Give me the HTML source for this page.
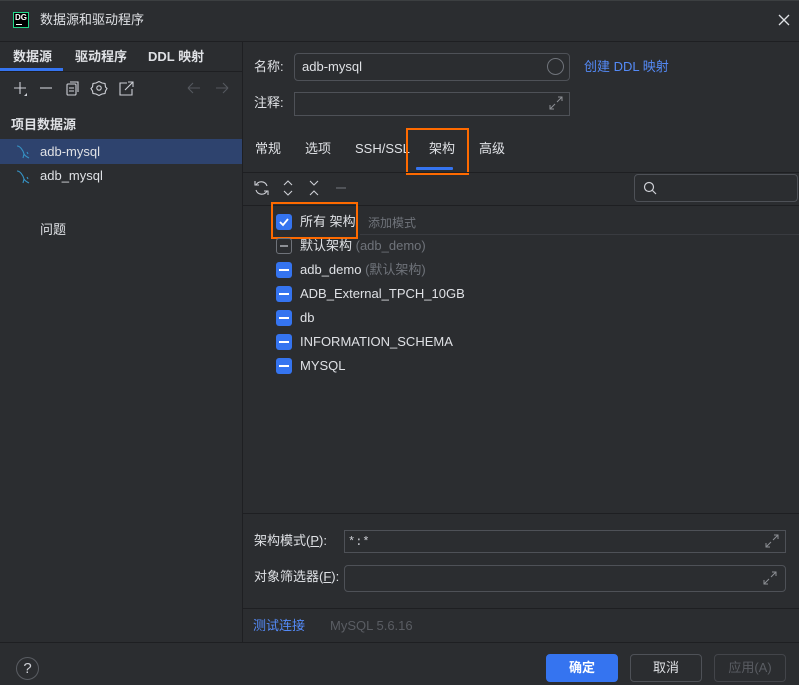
<!DOCTYPE html>
<html><head><meta charset="utf-8">
<style>
*{box-sizing:border-box;margin:0;padding:0}
body{width:799px;height:685px;background:#2b2d30;color:#dfe1e5;font-family:"Liberation Sans","Noto Sans CJK SC",sans-serif;font-size:13px;line-height:16px;position:relative;overflow:hidden}
.a{position:absolute;line-height:16px;white-space:nowrap}
.hl{position:absolute;height:1px;background:#1e1f22}
.vl{position:absolute;width:1px;background:#1e1f22}
.inp{position:absolute;border:1px solid #4e5157;border-radius:4px;background:#2b2d30}
.cb{position:absolute;left:276px;width:16px;height:16px;border-radius:3px;background:#3574f0}
.cb::after{content:"";position:absolute;left:3px;right:3px;top:7px;height:2px;background:#fff}
.row{position:absolute;left:300px;font-size:13px;line-height:16px;white-space:nowrap}
.gray{color:#6f737a}
.btn{position:absolute;top:654px;height:28px;width:72px;border-radius:4px;border:1px solid #4e5157;text-align:center;line-height:26px}
</style></head><body>
<div class="hl" style="top:0;left:0;width:799px;background:#3c3f41"></div>
<div class="a" style="left:13px;top:12px;width:16px;height:16px;background:#000;border:1px solid #21d789;"><div style="color:#fff;font-size:8px;font-weight:bold;line-height:8px;padding:1px 0 0 1px">DG</div><div style="position:absolute;left:2px;top:11px;width:6px;height:1px;background:#fff"></div></div>
<div class="a" style="left:40px;top:12px;font-size:13px">数据源和驱动程序</div>
<svg class="a" style="left:778px;top:14px" width="12" height="12"><path d="M1 1L11 11M11 1L1 11" stroke="#dfe1e5" stroke-width="1.3"/></svg>
<div class="hl" style="top:41px;left:0;width:799px"></div>
<div class="vl" style="left:242px;top:41px;height:601px"></div>
<div class="a" style="left:13px;top:49px;font-weight:bold">数据源</div>
<div class="a" style="left:75px;top:49px;font-weight:bold">驱动程序</div>
<div class="a" style="left:148px;top:49px;font-weight:bold">DDL 映射</div>
<div class="a" style="left:0;top:68px;width:63px;height:3px;background:#3574f0"></div>
<div class="hl" style="top:71px;left:0;width:242px"></div>
<svg class="a" style="left:12px;top:80px" width="125" height="18" fill="none" stroke="#ced0d6" stroke-width="1.1">
<path d="M2 8H14M8 2V14"/><path d="M15 13L15 16L12 16Z" fill="#ced0d6" stroke="none"/>
<path d="M28 8H40"/>
<rect x="55" y="4" width="9" height="11" rx="1"/><path d="M58 2H66V12M57 8H62M57 11H62"/>
<circle cx="87" cy="8" r="2.2"/><path d="M87 1.5L90 3L93 3.5L93.5 7L95 8.5L93.5 11L93 13.5L90 14L87 15.5L84 14L81 13.5L80.5 11L79 8.5L80.5 7L81 3.5L84 3Z"/>
<path d="M115 3H108V15H120V9M113 10L121 2M116 2H121V7"/>
</svg>
<svg class="a" style="left:186px;top:81px" width="44" height="14" fill="none" stroke="#55585e" stroke-width="1.1"><path d="M2 7H14M2 7L7 2M2 7L7 12"/><path d="M30 7H42M42 7L37 2M42 7L37 12"/></svg>
<div class="a" style="left:11px;top:117px;font-weight:bold">项目数据源</div>
<div class="a" style="left:0;top:139px;width:242px;height:25px;background:#2e436e"></div>
<svg class="a" style="left:15px;top:144px" width="16" height="16" fill="none" stroke="#3592c4" stroke-width="1.1"><path d="M2 2C5 2 8 6 9 10C10 12 12 13 14 14M9 10L8 14M12 8L13 10"/></svg>
<div class="a" style="left:40px;top:144px">adb-mysql</div>
<svg class="a" style="left:15px;top:169px" width="16" height="16" fill="none" stroke="#3592c4" stroke-width="1.1"><path d="M2 2C5 2 8 6 9 10C10 12 12 13 14 14M9 10L8 14M12 8L13 10"/></svg>
<div class="a" style="left:40px;top:168px">adb_mysql</div>
<div class="a" style="left:40px;top:222px">问题</div>
<div class="a" style="left:254px;top:59px">名称:</div>
<div class="inp" style="left:294px;top:53px;width:276px;height:28px"></div>
<div class="a" style="left:302px;top:59px">adb-mysql</div>
<div class="a" style="left:547px;top:58px;width:17px;height:17px;border:1px solid #6f737a;border-radius:50%"></div>
<div class="a" style="left:584px;top:59px;color:#548af7">创建 DDL 映射</div>
<div class="a" style="left:254px;top:95px">注释:</div>
<div class="inp" style="left:294px;top:92px;width:276px;height:24px;border-radius:0"></div>
<svg class="a" style="left:549px;top:96px" width="14" height="14" fill="none" stroke="#8c8f94" stroke-width="1"><path d="M8 6L13 1M9 1H13V5M6 8L1 13M1 9V13H5"/></svg>
<div class="a" style="left:255px;top:141px">常规</div>
<div class="a" style="left:305px;top:141px">选项</div>
<div class="a" style="left:355px;top:141px">SSH/SSL</div>
<div class="a" style="left:429px;top:141px">架构</div>
<div class="a" style="left:479px;top:141px">高级</div>
<div class="a" style="left:416px;top:167px;width:37px;height:3px;background:#3574f0;border-radius:1px"></div>
<div class="a" style="left:406px;top:128px;width:63px;height:47px;border:2px solid #ff6a00"></div>
<div class="hl" style="top:172px;left:243px;width:556px"></div>
<svg class="a" style="left:253px;top:179px" width="100" height="18" fill="none" stroke="#ced0d6" stroke-width="1.1">
<path d="M14 7A6 6 0 0 0 3 6M2 2V6H6M3 11A6 6 0 0 0 14 12M15 16V12H11"/>
<path d="M31 6L35 2L39 6M31 12L35 16L39 12"/>
<path d="M57 2L61 6L65 2M57 16L61 12L65 16"/>
<path d="M83 9H93" stroke="#6f737a"/>
</svg>
<div class="inp" style="left:634px;top:174px;width:164px;height:28px"></div>
<svg class="a" style="left:643px;top:181px" width="14" height="14" fill="none" stroke="#ced0d6" stroke-width="1.2"><circle cx="6" cy="6" r="4.5"/><path d="M9.5 9.5L13 13"/></svg>
<div class="hl" style="top:205px;left:243px;width:556px"></div>
<div class="a" style="left:276px;top:214px;width:16px;height:16px;border-radius:3px;background:#3574f0"></div>
<svg class="a" style="left:276px;top:214px" width="16" height="16"><path d="M4 8L7 11L12 5" stroke="#fff" stroke-width="1.8" fill="none"/></svg>
<div class="row" style="top:214px">所有 架构</div>
<div class="a gray" style="left:368px;top:215px;font-size:12px">添加模式</div>
<div class="hl" style="top:234px;left:360px;width:439px;background:#393b40"></div>
<div class="a" style="left:271px;top:202px;width:87px;height:37px;border:2px solid #ff6a00"></div>
<div class="a" style="left:276px;top:238px;width:16px;height:16px;border-radius:3px;border:1px solid #6f737a"><div style="position:absolute;left:3px;right:3px;top:6px;height:2px;background:#8c8f94"></div></div>
<div class="row" style="top:238px">默认架构 <span class="gray">(adb_demo)</span></div>
<div class="cb" style="top:262px"></div><div class="row" style="top:262px">adb_demo <span class="gray">(默认架构)</span></div>
<div class="cb" style="top:286px"></div><div class="row" style="top:286px">ADB_External_TPCH_10GB</div>
<div class="cb" style="top:310px"></div><div class="row" style="top:310px">db</div>
<div class="cb" style="top:334px"></div><div class="row" style="top:334px">INFORMATION_SCHEMA</div>
<div class="cb" style="top:358px"></div><div class="row" style="top:358px">MYSQL</div>
<div class="hl" style="top:513px;left:243px;width:556px"></div>
<div class="a" style="left:254px;top:533px">架构模式(<u>P</u>):</div>
<div class="inp" style="left:344px;top:530px;width:442px;height:23px;border-radius:0"></div>
<div class="a" style="left:348px;top:534px;color:#ced0d6;font-family:'Liberation Mono',monospace;font-size:12px">*:*</div>
<svg class="a" style="left:765px;top:534px" width="14" height="14" fill="none" stroke="#8c8f94" stroke-width="1"><path d="M8 6L13 1M9 1H13V5M6 8L1 13M1 9V13H5"/></svg>
<div class="a" style="left:254px;top:569px">对象筛选器(<u>F</u>):</div>
<div class="inp" style="left:344px;top:565px;width:442px;height:27px"></div>
<svg class="a" style="left:763px;top:571px" width="14" height="14" fill="none" stroke="#8c8f94" stroke-width="1"><path d="M8 6L13 1M9 1H13V5M6 8L1 13M1 9V13H5"/></svg>
<div class="hl" style="top:608px;left:243px;width:556px"></div>
<div class="a" style="left:253px;top:618px;color:#548af7">测试连接</div>
<div class="a" style="left:330px;top:618px;color:#5a5d63">MySQL 5.6.16</div>
<div class="hl" style="top:642px;left:0;width:799px"></div>
<div class="a" style="left:16px;top:657px;width:23px;height:23px;border:1px solid #5a5d63;border-radius:50%;text-align:center;line-height:21px;color:#ced0d6;font-size:15px">?</div>
<div class="btn" style="left:546px;background:#3574f0;border-color:#3574f0;color:#fff;font-weight:bold">确定</div>
<div class="btn" style="left:630px">取消</div>
<div class="btn" style="left:714px;color:#5a5d63;border-color:#43454a">应用(A)</div>
</body></html>
